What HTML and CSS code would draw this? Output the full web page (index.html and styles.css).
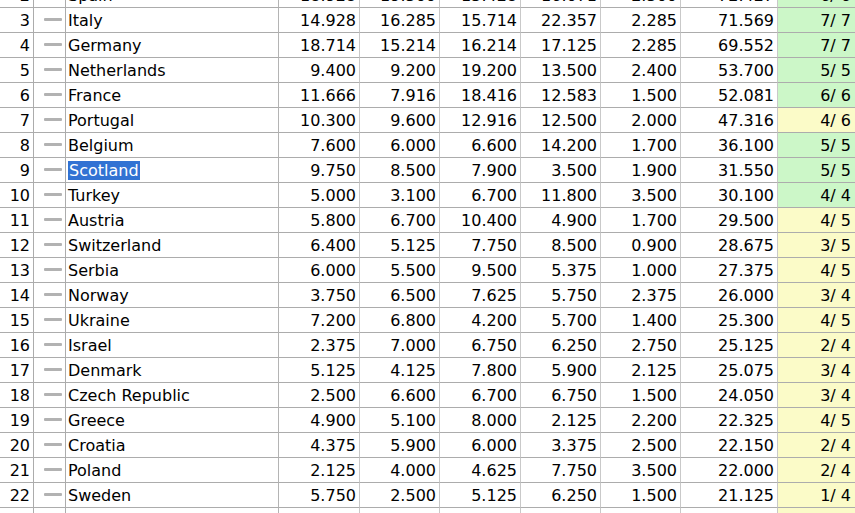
FILE: index.html
```html
<!DOCTYPE html>
<html>
<head>
<meta charset="utf-8">
<link rel="stylesheet" href="styles.css">
</head>
<body>
<div class="viewport">
  <div class="grid" id="grid">
    <div class="c rank">2</div><div class="c trend"><span class="dash"></span></div><div class="c name">Spain</div><div class="c num">18.928</div><div class="c num">19.500</div><div class="c num">15.428</div><div class="c num">16.071</div><div class="c num">2.500</div><div class="c num">72.427</div><div class="c ratio ok">6/ 6</div>
    <div class="c rank">3</div><div class="c trend"><span class="dash"></span></div><div class="c name">Italy</div><div class="c num">14.928</div><div class="c num">16.285</div><div class="c num">15.714</div><div class="c num">22.357</div><div class="c num">2.285</div><div class="c num">71.569</div><div class="c ratio ok">7/ 7</div>
    <div class="c rank">4</div><div class="c trend"><span class="dash"></span></div><div class="c name">Germany</div><div class="c num">18.714</div><div class="c num">15.214</div><div class="c num">16.214</div><div class="c num">17.125</div><div class="c num">2.285</div><div class="c num">69.552</div><div class="c ratio ok">7/ 7</div>
    <div class="c rank">5</div><div class="c trend"><span class="dash"></span></div><div class="c name">Netherlands</div><div class="c num">9.400</div><div class="c num">9.200</div><div class="c num">19.200</div><div class="c num">13.500</div><div class="c num">2.400</div><div class="c num">53.700</div><div class="c ratio ok">5/ 5</div>
    <div class="c rank">6</div><div class="c trend"><span class="dash"></span></div><div class="c name">France</div><div class="c num">11.666</div><div class="c num">7.916</div><div class="c num">18.416</div><div class="c num">12.583</div><div class="c num">1.500</div><div class="c num">52.081</div><div class="c ratio ok">6/ 6</div>
    <div class="c rank">7</div><div class="c trend"><span class="dash"></span></div><div class="c name">Portugal</div><div class="c num">10.300</div><div class="c num">9.600</div><div class="c num">12.916</div><div class="c num">12.500</div><div class="c num">2.000</div><div class="c num">47.316</div><div class="c ratio part">4/ 6</div>
    <div class="c rank">8</div><div class="c trend"><span class="dash"></span></div><div class="c name">Belgium</div><div class="c num">7.600</div><div class="c num">6.000</div><div class="c num">6.600</div><div class="c num">14.200</div><div class="c num">1.700</div><div class="c num">36.100</div><div class="c ratio ok">5/ 5</div>
    <div class="c rank">9</div><div class="c trend"><span class="dash"></span></div><div class="c name"><span class="sel">Scotland</span></div><div class="c num">9.750</div><div class="c num">8.500</div><div class="c num">7.900</div><div class="c num">3.500</div><div class="c num">1.900</div><div class="c num">31.550</div><div class="c ratio ok">5/ 5</div>
    <div class="c rank">10</div><div class="c trend"><span class="dash"></span></div><div class="c name">Turkey</div><div class="c num">5.000</div><div class="c num">3.100</div><div class="c num">6.700</div><div class="c num">11.800</div><div class="c num">3.500</div><div class="c num">30.100</div><div class="c ratio ok">4/ 4</div>
    <div class="c rank">11</div><div class="c trend"><span class="dash"></span></div><div class="c name">Austria</div><div class="c num">5.800</div><div class="c num">6.700</div><div class="c num">10.400</div><div class="c num">4.900</div><div class="c num">1.700</div><div class="c num">29.500</div><div class="c ratio part">4/ 5</div>
    <div class="c rank">12</div><div class="c trend"><span class="dash"></span></div><div class="c name">Switzerland</div><div class="c num">6.400</div><div class="c num">5.125</div><div class="c num">7.750</div><div class="c num">8.500</div><div class="c num">0.900</div><div class="c num">28.675</div><div class="c ratio part">3/ 5</div>
    <div class="c rank">13</div><div class="c trend"><span class="dash"></span></div><div class="c name">Serbia</div><div class="c num">6.000</div><div class="c num">5.500</div><div class="c num">9.500</div><div class="c num">5.375</div><div class="c num">1.000</div><div class="c num">27.375</div><div class="c ratio part">4/ 5</div>
    <div class="c rank">14</div><div class="c trend"><span class="dash"></span></div><div class="c name">Norway</div><div class="c num">3.750</div><div class="c num">6.500</div><div class="c num">7.625</div><div class="c num">5.750</div><div class="c num">2.375</div><div class="c num">26.000</div><div class="c ratio part">3/ 4</div>
    <div class="c rank">15</div><div class="c trend"><span class="dash"></span></div><div class="c name">Ukraine</div><div class="c num">7.200</div><div class="c num">6.800</div><div class="c num">4.200</div><div class="c num">5.700</div><div class="c num">1.400</div><div class="c num">25.300</div><div class="c ratio part">4/ 5</div>
    <div class="c rank">16</div><div class="c trend"><span class="dash"></span></div><div class="c name">Israel</div><div class="c num">2.375</div><div class="c num">7.000</div><div class="c num">6.750</div><div class="c num">6.250</div><div class="c num">2.750</div><div class="c num">25.125</div><div class="c ratio part">2/ 4</div>
    <div class="c rank">17</div><div class="c trend"><span class="dash"></span></div><div class="c name">Denmark</div><div class="c num">5.125</div><div class="c num">4.125</div><div class="c num">7.800</div><div class="c num">5.900</div><div class="c num">2.125</div><div class="c num">25.075</div><div class="c ratio part">3/ 4</div>
    <div class="c rank">18</div><div class="c trend"><span class="dash"></span></div><div class="c name">Czech Republic</div><div class="c num">2.500</div><div class="c num">6.600</div><div class="c num">6.700</div><div class="c num">6.750</div><div class="c num">1.500</div><div class="c num">24.050</div><div class="c ratio part">3/ 4</div>
    <div class="c rank">19</div><div class="c trend"><span class="dash"></span></div><div class="c name">Greece</div><div class="c num">4.900</div><div class="c num">5.100</div><div class="c num">8.000</div><div class="c num">2.125</div><div class="c num">2.200</div><div class="c num">22.325</div><div class="c ratio part">4/ 5</div>
    <div class="c rank">20</div><div class="c trend"><span class="dash"></span></div><div class="c name">Croatia</div><div class="c num">4.375</div><div class="c num">5.900</div><div class="c num">6.000</div><div class="c num">3.375</div><div class="c num">2.500</div><div class="c num">22.150</div><div class="c ratio part">2/ 4</div>
    <div class="c rank">21</div><div class="c trend"><span class="dash"></span></div><div class="c name">Poland</div><div class="c num">2.125</div><div class="c num">4.000</div><div class="c num">4.625</div><div class="c num">7.750</div><div class="c num">3.500</div><div class="c num">22.000</div><div class="c ratio part">2/ 4</div>
    <div class="c rank">22</div><div class="c trend"><span class="dash"></span></div><div class="c name">Sweden</div><div class="c num">5.750</div><div class="c num">2.500</div><div class="c num">5.125</div><div class="c num">6.250</div><div class="c num">1.500</div><div class="c num">21.125</div><div class="c ratio part">1/ 4</div>
    <div class="c rank">23</div><div class="c trend"><span class="dash"></span></div><div class="c name">Hungary</div><div class="c num">3.500</div><div class="c num">4.200</div><div class="c num">5.000</div><div class="c num">5.100</div><div class="c num">1.800</div><div class="c num">19.600</div><div class="c ratio part">1/ 4</div>
  </div>
</div>
</body>
</html>
```

FILE: styles.css
```css
html, body {
  margin: 0;
  padding: 0;
  background: #ffffff;
}

.viewport {
  width: 855px;
  height: 513px;
  overflow: hidden;
}

.grid {
  margin-top: -17px;
  width: 855px;
  display: grid;
  grid-template-columns: 34px 32px 213px 81px 80px 81px 80px 80px 97px 1fr;
  grid-auto-rows: 25px;
  font-family: "DejaVu Sans", Verdana, sans-serif;
  font-size: 16px;
  color: #000000;
}

.c {
  box-sizing: border-box;
  height: 25px;
  border-bottom: 1px solid #acacac;
  border-right: 1px solid #c9c9c9;
  display: flex;
  align-items: center;
  white-space: nowrap;
  overflow: hidden;
}

.rank {
  justify-content: flex-end;
  padding-right: 3px;
  border-right-color: #acacac;
}

.trend {
  padding-left: 10px;
  border-right-color: #acacac;
}

.dash {
  display: block;
  width: 18px;
  height: 3px;
  margin-top: -1px;
  background: #b2b2b2;
  border-radius: 1px;
}

.name {
  padding-left: 2px;
  border-right-color: #b4b4b4;
}

.num {
  justify-content: flex-end;
  padding-right: 3px;
}

.ratio {
  justify-content: flex-end;
  padding-right: 4px;
  border-right: none;
}

.ok {
  background: #ccf7c8;
}

.part {
  background: #fbfbc8;
}

.sel {
  background: #3172d3;
  color: #ffffff;
  line-height: 19px;
  padding: 0 1px;
}
```
